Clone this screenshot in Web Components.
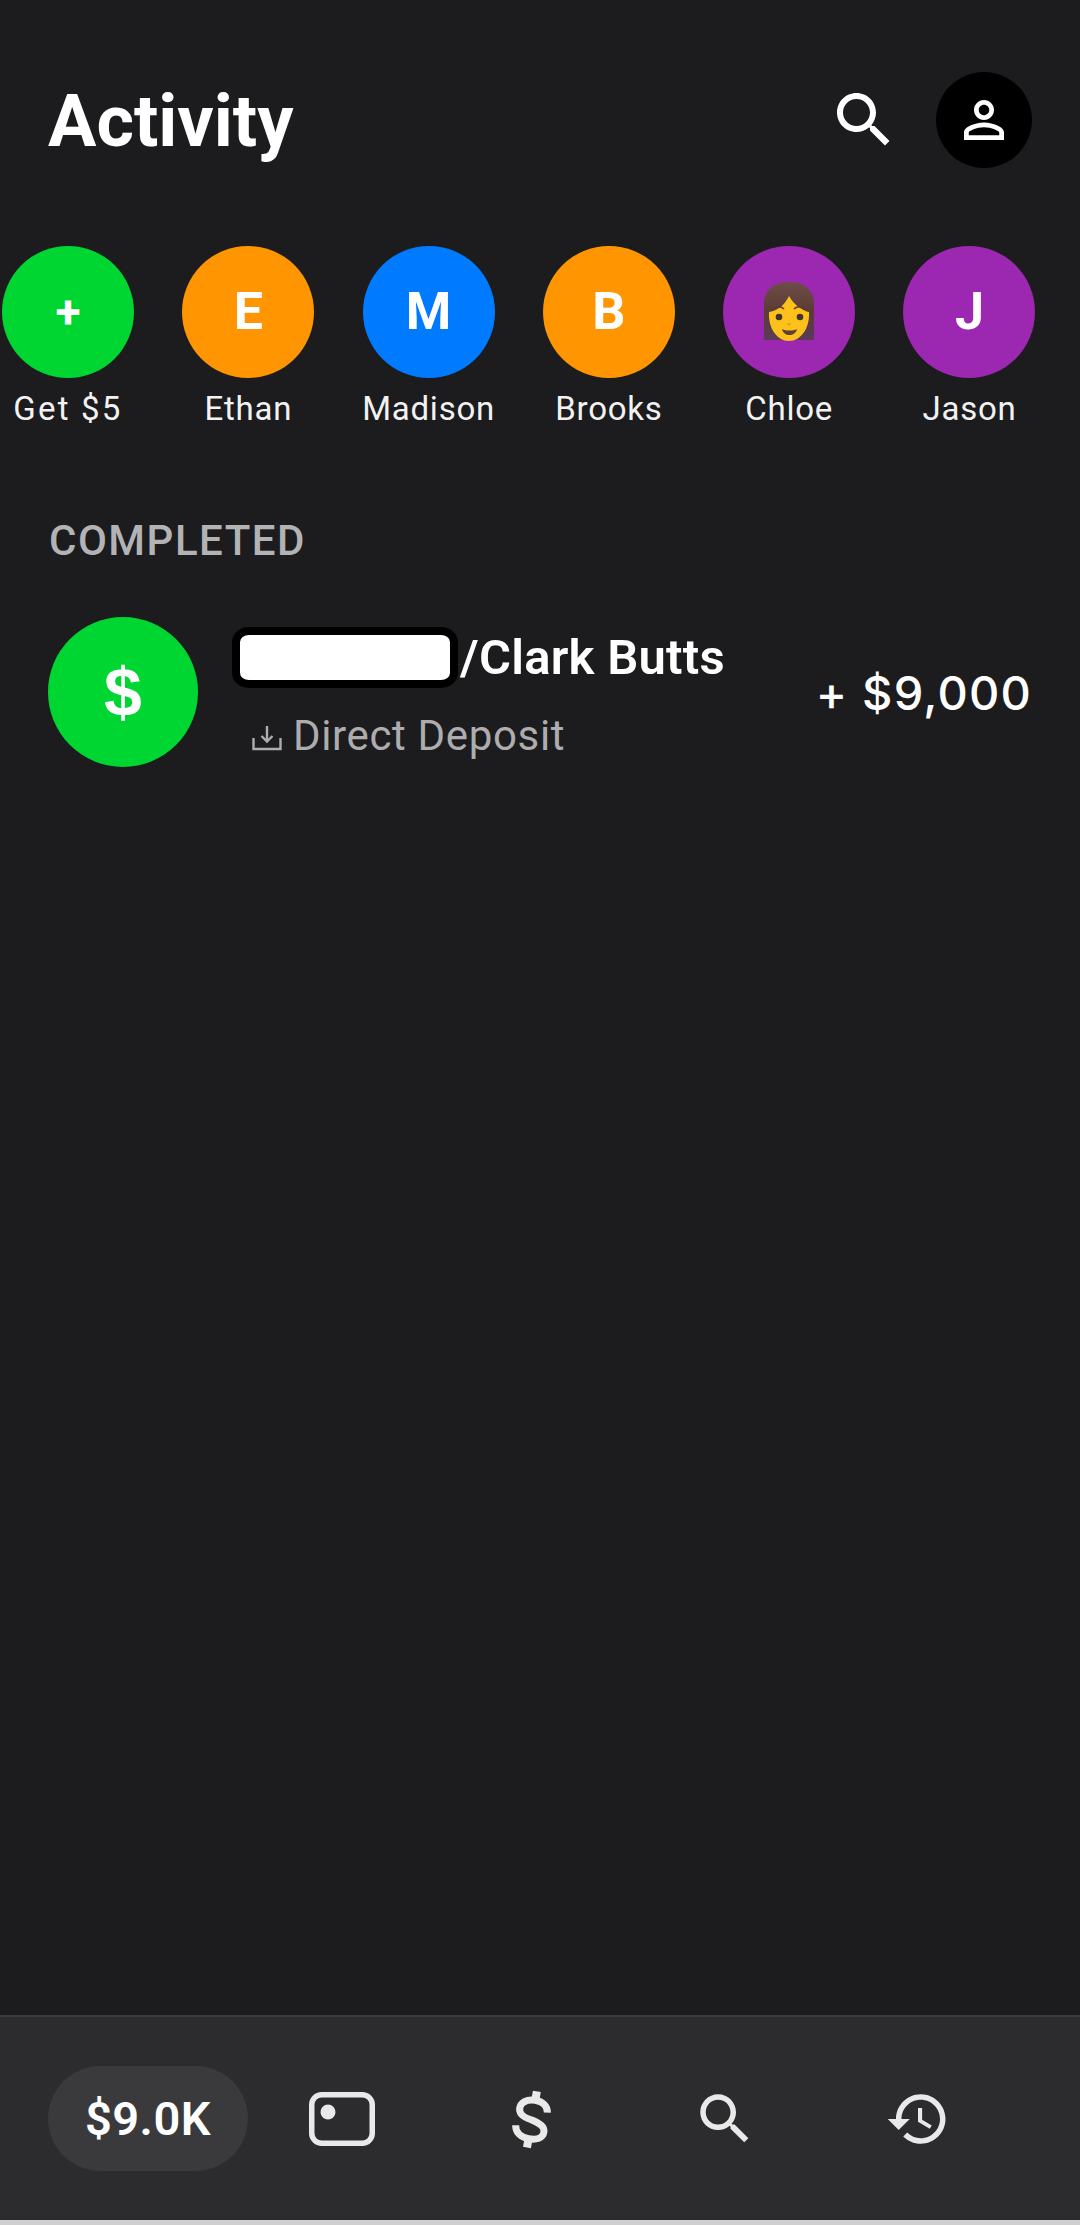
<!DOCTYPE html>
<html><head><meta charset="utf-8"><style>
html,body{margin:0;padding:0;background:#1c1c1e;font-family:Roboto,"Liberation Sans",sans-serif;}
body{width:1080px;height:2225px;overflow:hidden;}
</style></head><body>
<activity-app></activity-app>
<script>
const def=(n,html,attrs)=>{customElements.define(n,class extends HTMLElement{
  connectedCallback(){ if(this.shadowRoot)return; const s=this.attachShadow({mode:'open'});
    s.innerHTML=typeof html==='function'?html(this):html; }
});};
const ICON={
search:'M15.5 14h-.79l-.28-.27C15.41 12.59 16 11.11 16 9.5 16 5.91 13.09 3 9.5 3S3 5.91 3 9.5 5.91 16 9.5 16c1.61 0 3.09-.59 4.23-1.57l.27.28v.79l5 4.99L20.49 19l-4.99-5zm-6 0C7.01 14 5 11.99 5 9.5S7.01 5 9.5 5 14 7.01 14 9.5 11.99 14 9.5 14z',
person:'M12 5.9c1.16 0 2.1.94 2.1 2.1s-.94 2.1-2.1 2.1S9.9 9.16 9.9 8s.94-2.1 2.1-2.1m0 9c2.97 0 6.1 1.46 6.1 2.1v1.1H5.9V17c0-.64 3.13-2.1 6.1-2.1M12 4C9.79 4 8 5.79 8 8s1.79 4 4 4 4-1.79 4-4-1.79-4-4-4zm0 9c-2.67 0-8 1.34-8 4v3h16v-3c0-2.66-5.33-4-8-4z',
history:'M13 3c-4.97 0-9 4.03-9 9H1l3.89 3.89.07.14L9 12H6c0-3.87 3.13-7 7-7s7 3.13 7 7-3.13 7-7 7c-1.93 0-3.68-.79-4.94-2.06l-1.42 1.42C8.27 19.99 10.51 21 13 21c4.97 0 9-4.03 9-9s-4.03-9-9-9zm-1 5v5l4.28 2.54.72-1.21-3.5-2.08V8H12z'
};
def('m-icon',h=>`<style>:host{display:block;width:var(--s,72px);height:var(--s,72px);color:inherit}svg{display:block;width:100%;height:100%;fill:currentColor}</style><svg viewBox="0 0 24 24"><path d="${ICON[h.getAttribute('name')]}"/></svg>`);

def('page-header',`<style>
:host{display:flex;align-items:center;box-sizing:border-box;height:240px;padding:0 48px 0 48px;color:#fff}
h1{margin:3px 0 0;flex:1;font:700 72px/1 Roboto,sans-serif;letter-spacing:0}
m-icon{--s:72px;margin-right:36px}
.me{width:96px;height:96px;border-radius:50%;background:#000;display:flex;align-items:center;justify-content:center}
.me m-icon{--s:60px;margin:0}
</style><h1>Activity</h1><m-icon name="search"></m-icon><div class="me"><m-icon name="person"></m-icon></div>`);

def('contact-item',h=>`<style>
:host{display:flex;flex-direction:column;align-items:center;width:132px;flex:none;color:#fff}
.c{width:132px;height:132px;border-radius:50%;background:${h.getAttribute('color')};display:flex;align-items:center;justify-content:center;font:700 ${h.hasAttribute('small')?'46px':'52px'}/1 Roboto,sans-serif}
.l{margin-top:10px;font:400 33px/42px Roboto,sans-serif;letter-spacing:${h.getAttribute('ls')||'.75px'};white-space:nowrap;color:#f2f2f2}
</style><div class="c"><slot></slot></div><div class="l">${h.getAttribute('label')}</div>`);

def('contact-row',`<style>:host{display:flex;gap:48.3px;padding-left:2px;height:186px;box-sizing:content-box}</style><slot></slot>`);

def('section-label',`<style>:host{display:block;margin:85px 0 0 49px;font:500 42px/48px Roboto,sans-serif;letter-spacing:1.5px;color:#b3b3b5}</style><slot></slot>`);

def('redact-mark',`<style>:host{display:block;box-sizing:border-box;width:226px;height:61px;flex:none;border:8px solid #000;border-radius:17px/15px;background:#fff}</style>`);

def('txn-row',`<style>
:host{display:flex;align-items:center;height:150px;margin-top:52px;padding:0 48px 0 48px;color:#fff}
.a{width:150px;height:150px;border-radius:50%;background:#00d632;display:flex;align-items:center;justify-content:center;font:700 68px/1 "Liberation Sans",sans-serif;flex:none;margin-right:34px}
.m{flex:1;min-width:0}
.t{display:flex;align-items:center;height:61px;font:600 49px/61px Roboto,sans-serif;margin-top:2px;letter-spacing:.25px}
.t span{margin-left:2px}
.s{display:flex;align-items:center;margin:24px 0 0 20px;font:400 42px/48px Roboto,sans-serif;color:#adadaf;letter-spacing:.65px}
.s svg{width:30px;height:30px;margin-right:11px;flex:none;margin-top:4px}
.v{font:500 47px/1 Inter,sans-serif;flex:none;letter-spacing:1.2px}
</style><div class="a">$</div><div class="m"><div class="t"><redact-mark></redact-mark><span>/Clark Butts</span></div>
<div class="s"><svg viewBox="0 0 30 30" fill="none" stroke="#adadaf" stroke-width="2.4"><path d="M1.500 15v11h27V15M15 3v15"/><path d="M9.500 13l5.500 5.500 5.500-5.500"/></svg>Direct Deposit</div></div><div class="v">+ $9,000</div>`);

def('bottom-nav',`<style>
:host{display:flex;align-items:center;box-sizing:border-box;height:205px;border-top:2px solid #3a3a3c;background:#2c2c2e;padding-left:48px;color:#e9e9e9}
.p{width:200px;height:105px;border-radius:53px;background:#3a3a3c;display:flex;align-items:center;justify-content:center;color:#fff;font:600 47px/1 Roboto,sans-serif;letter-spacing:.5px;flex:none}
.cell{display:flex;justify-content:center;flex:none}
m-icon{--s:66px}
</style>
<div class="p">$9.0K</div>
<div class="cell" style="width:188px"><svg width="66" height="54" viewBox="0 0 66 54" style="display:block"><rect x="2.750" y="2.750" width="60.500" height="48.500" rx="10" fill="none" stroke="currentColor" stroke-width="5.500"/><circle cx="19" cy="20" r="7.500" fill="currentColor"/></svg></div>
<div class="cell" style="width:191px"><svg width="44" height="66" viewBox="-22 -33 44 66" style="display:block"><g transform="rotate(10)" fill="none" stroke="currentColor"><path stroke-width="7" d="M14 -9C13 -16 7 -19 0 -19C-9 -19 -14 -14 -14 -9C-14 -2 -8 0 0 1C8 3 14 5 14 11C14 17 8 20 0 20C-8 20 -14 16 -15 9"/><path stroke-width="8" d="M0 -19L0 -28M0 20L0 29"/></g></svg></div>
<div class="cell" style="width:195px"><m-icon name="search"></m-icon></div>
<div class="cell" style="width:192px"><m-icon name="history"></m-icon></div>`);

def('woman-emoji',`<style>:host{display:block;width:60px;height:64px;flex:none}svg{display:block;width:100%;height:100%}</style>
<svg viewBox="0 0 60 64"><defs><linearGradient id="h" x1="0" y1="0" x2="0" y2="1"><stop offset="0" stop-color="#6e4d48"/><stop offset=".5" stop-color="#5b3c33"/><stop offset="1" stop-color="#5b3a5a"/></linearGradient></defs>
<path d="M5 60V24C5 10 15 2 30 2s25 8 25 22v36H5z" fill="url(#h)"/>
<path d="M10 32c6-1 15-5 20-16 5 9 14 15 20 16 1 16-8 29-20 29S9 48 10 32z" fill="#fcc21b"/>
<circle cx="20" cy="37" r="3.300" fill="#42312c"/><circle cx="41" cy="37" r="3.300" fill="#42312c"/>
<path d="M14 29c3-3 8-3 11 0M35 29c3-3 8-3 11 0" stroke="#5b3c33" stroke-width="1.600" fill="none"/>
<path d="M28 43.500h4l-2 2.200z" fill="#e59600"/>
<path d="M23 49c4 2 11 2 15 0-1 4-4 6-7.500 6S24 53 23 49z" fill="#5d4037"/></svg>`);

def('activity-app',`<style>
:host{display:flex;flex-direction:column;height:2225px}
main{flex:1;min-height:0}
.strip{height:5px;background:#cfcfcf;flex:none}
</style>
<main><page-header></page-header>
<div style="height:6px"></div>
<contact-row>
<contact-item color="#00d632" label="Get $5" ls="2.200px" small>+</contact-item>
<contact-item color="#ff9500" label="Ethan">E</contact-item>
<contact-item color="#007aff" label="Madison">M</contact-item>
<contact-item color="#ff9500" label="Brooks">B</contact-item>
<contact-item color="#9c27b0" label="Chloe"><woman-emoji></woman-emoji></contact-item>
<contact-item color="#9c27b0" label="Jason">J</contact-item>
</contact-row>
<section-label>COMPLETED</section-label>
<txn-row></txn-row></main>
<bottom-nav></bottom-nav><div class="strip"></div>`);
</script></body></html>
